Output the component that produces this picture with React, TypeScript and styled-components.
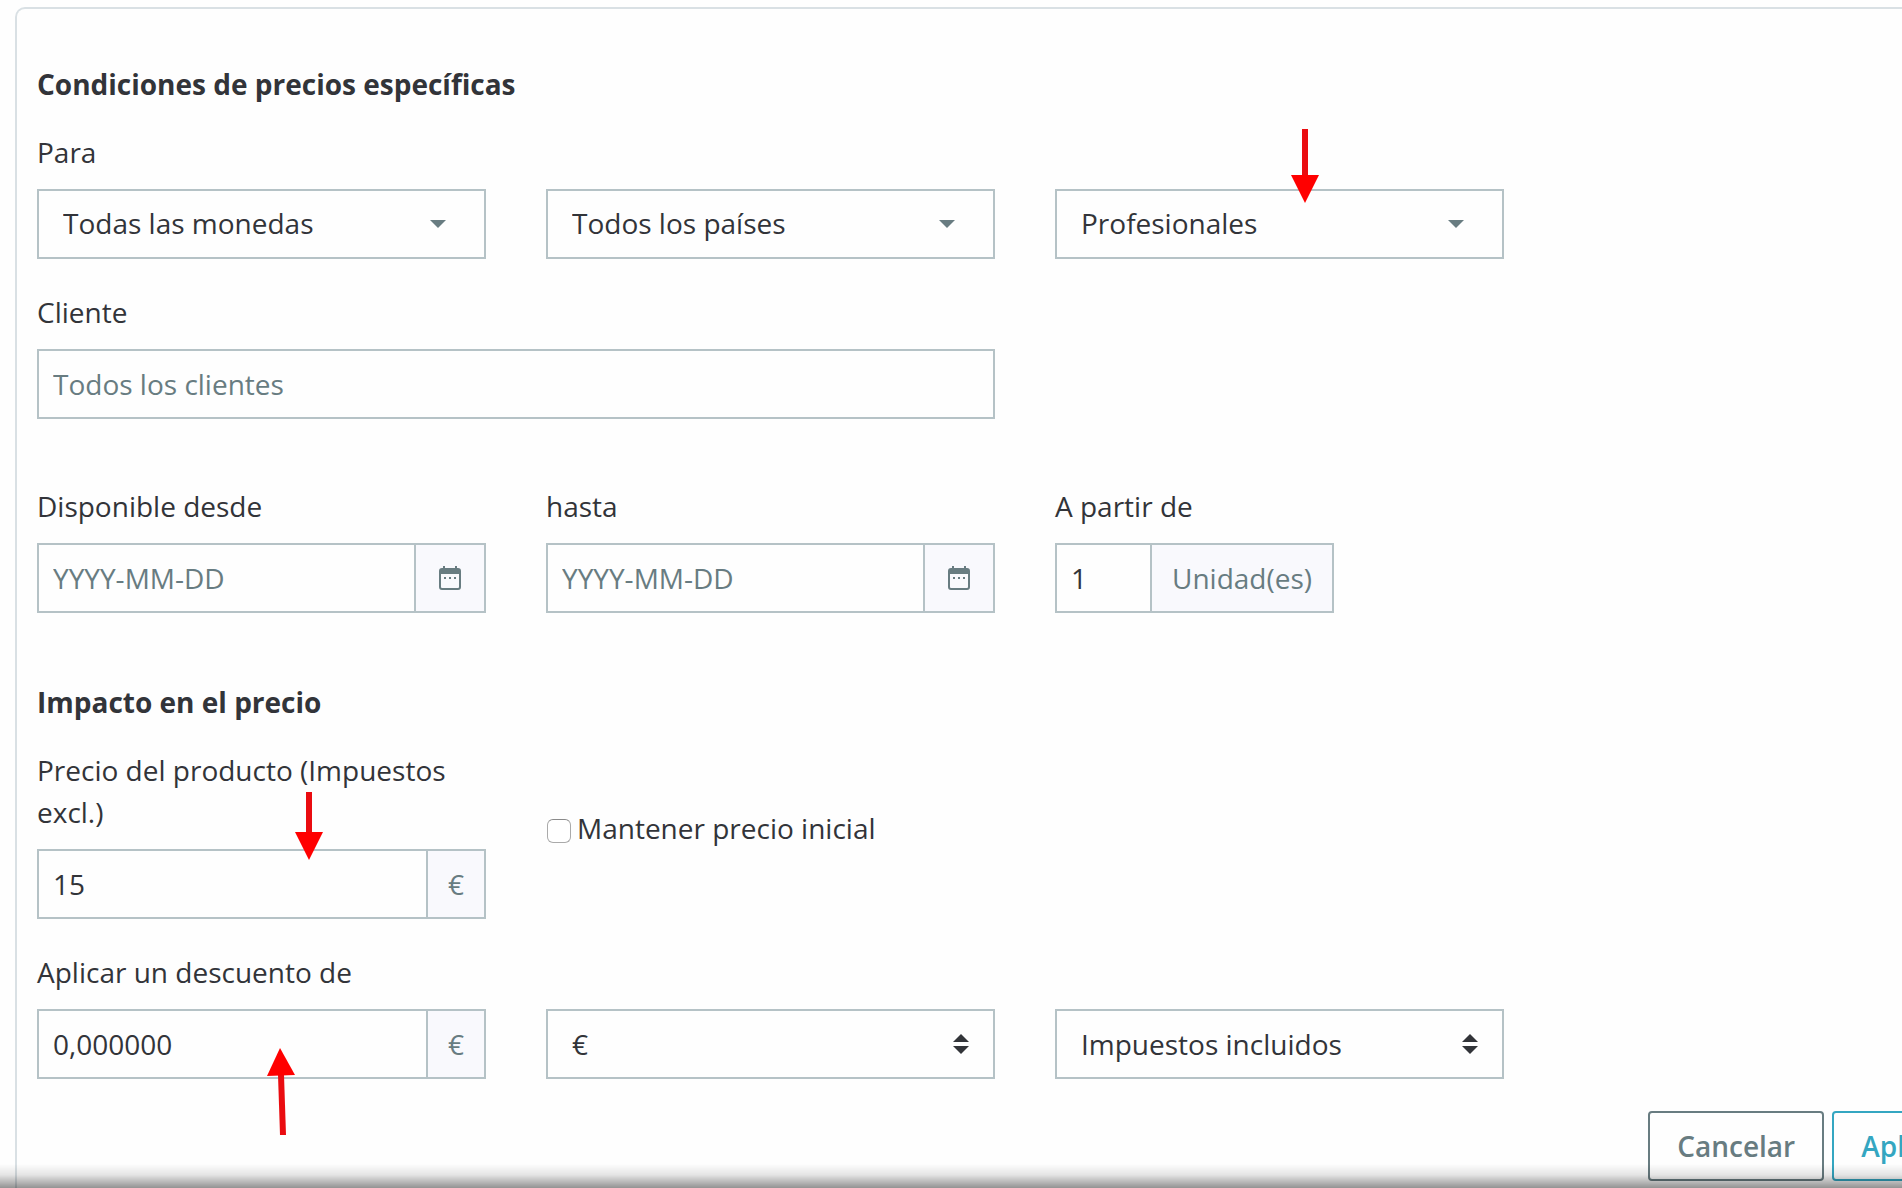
import React from "react";
import styled, { createGlobalStyle } from "styled-components";

const color = {
  text: "#323439",
  muted: "#687c81",
  border: "#b5c2c6",
  panelBorder: "#d9e0e4",
  addon: "#f9f9fd",
  surface: "#fefefe",
  primary: "#34a6c1",
  mark: "#ff0000",
  markShaft: "#ea0c10",
};

const GlobalStyle = createGlobalStyle`
  *, *::before, *::after { box-sizing: border-box; }
  body {
    margin: 0;
    background: ${color.surface};
    color: ${color.text};
    font-family: "Open Sans", "Noto Sans", sans-serif;
    font-size: 28px;
    line-height: 42px;
  }
  button, input, select { font: inherit; color: inherit; }
`;

const Page = styled.main`
  min-height: 100vh;
  padding: 7px 0 0 15px;
  overflow: hidden;
`;

/* The panel runs past the right edge of the window. */
const Panel = styled.form`
  width: calc(100% + 133px);
  padding: 54px 20px 7px;
  border: 2px solid ${color.panelBorder};
  border-bottom: 0;
  border-radius: 10px 10px 0 0;
`;

const Section = styled.section`
  & + & {
    margin-top: 68px;
  }
`;

const Title = styled.h2`
  margin: 0 0 26px;
  font-size: 28px;
  line-height: 42px;
  font-weight: 700;
`;

const Rows = styled.div`
  display: flex;
  flex-direction: column;
  gap: 32px;
`;

const Row = styled.div<{ $apart?: boolean }>`
  display: grid;
  grid-template-columns: repeat(4, minmax(0, 1fr));
  column-gap: 60px;
  padding-top: ${(p) => (p.$apart ? 34 : 0)}px;
`;

const Field = styled.div<{ $span?: number }>`
  grid-column: span ${(p) => p.$span ?? 1};
  display: flex;
  flex-direction: column;
  justify-content: flex-end;
`;

const Label = styled.label`
  margin-bottom: 16px;
`;

const Control = styled.div<{ $fit?: boolean }>`
  position: relative;
  display: flex;
  width: ${(p) => (p.$fit ? "fit-content" : "100%")};
  height: 70px;
  border: 2px solid ${color.border};
  background: ${color.surface};
`;

const Input = styled.input<{ $short?: boolean }>`
  flex: ${(p) => (p.$short ? "0 0 93px" : "1 1 0")};
  min-width: 0;
  padding: 0 14px;
  border: 0;
  background: transparent;

  &::placeholder {
    color: ${color.muted};
    opacity: 1;
  }
`;

const Addon = styled.span`
  display: flex;
  align-items: center;
  padding: 0 20px;
  border-left: 2px solid ${color.border};
  background: ${color.addon};
  color: ${color.muted};
`;

const CalendarButton = styled.button`
  display: flex;
  align-items: center;
  justify-content: center;
  width: 70px;
  padding: 0;
  border: 0;
  border-left: 2px solid ${color.border};
  background: ${color.addon};
  color: ${color.muted};
`;

const SelectBox = styled(Control)`
  display: grid;
  align-items: center;

  > select,
  > svg:last-of-type {
    grid-area: 1 / 1;
  }
`;

const NativeSelect = styled.select<{ $dropdown: boolean }>`
  width: 100%;
  height: 100%;
  padding: 0 64px ${(p) => (p.$dropdown ? 2 : 0)}px 24px;
  border: 0;
  appearance: none;
  background: transparent;
`;

const Caret = styled.svg`
  justify-self: end;
  width: 16px;
  height: 8px;
  margin-right: 38px;
  fill: ${color.muted};
  pointer-events: none;
`;

const Sorter = styled.svg`
  justify-self: end;
  width: 16px;
  height: 20px;
  margin-right: 24px;
  fill: ${color.text};
  pointer-events: none;
`;

const CheckField = styled.div`
  display: flex;
  align-items: center;
  align-self: start;
  gap: 6px;
  padding-top: 58px;
`;

const Checkbox = styled.input`
  appearance: none;
  width: 24px;
  height: 24px;
  margin: 6px 0 0 1px;
  border: 1px solid #aaaaaa;
  border-top-color: #8a8a8a;
  border-radius: 6px;
  background: #ffffff;

  &:checked {
    background: ${color.primary};
  }
`;

const Actions = styled.div`
  display: flex;
  justify-content: flex-end;
  gap: 8px;
  margin-top: 32px;
  padding-right: 29px;
`;

const Button = styled.button<{ $primary?: boolean }>`
  height: 70px;
  padding: 0 27px;
  border: 2px solid currentColor;
  border-radius: 4px;
  background: ${color.surface};
  color: ${(p) => (p.$primary ? color.primary : color.muted)};
  font-weight: 600;
`;

const MarkSvg = styled.svg<{ $left: number; $top: number }>`
  position: absolute;
  z-index: 1;
  left: ${(p) => p.$left}px;
  top: ${(p) => p.$top}px;
  pointer-events: none;
`;

const BottomShade = styled.div`
  position: fixed;
  inset: auto 0 0;
  height: 24px;
  background: linear-gradient(
    rgba(0, 0, 0, 0),
    rgba(0, 0, 0, 0.1) 45%,
    rgba(0, 0, 0, 0.42)
  );
  pointer-events: none;
`;

function DownMark({ left, top, length }: { left: number; top: number; length: number }) {
  const neck = length - 28;
  return (
    <MarkSvg $left={left} $top={top} width="28" height={length} aria-hidden="true">
      <rect x="11" y="0" width="6" height={neck + 1} fill={color.markShaft} />
      <path d={`M0 ${neck}H28L14 ${length}Z`} fill={color.mark} />
    </MarkSvg>
  );
}

function UpMark({ left, top }: { left: number; top: number }) {
  return (
    <MarkSvg $left={left} $top={top} width="28" height="88" aria-hidden="true">
      <path d="M11 27L17 27L19 87L13 87Z" fill={color.markShaft} />
      <path d="M13 0L28 27L0 28Z" fill={color.mark} />
    </MarkSvg>
  );
}

function CalendarIcon() {
  return (
    <svg width="22" height="24" viewBox="0 0 22 24" fill="currentColor" aria-hidden="true">
      <path
        fillRule="evenodd"
        d="M4 0H6V2H16V0H18V2H19Q22 2 22 5V21Q22 24 19 24H3Q0 24 0 21V5Q0 2 3 2H4ZM2 8V21Q2 22 3 22H19Q20 22 20 21V8Z"
      />
      <path d="M5 11H7V13H5ZM10 11H12V13H10ZM15 11H17V13H15Z" />
    </svg>
  );
}

type SelectProps = {
  id: string;
  options: string[];
  name?: string;
  sorter?: boolean;
  children?: React.ReactNode;
};

function Select({ id, options, name, sorter, children }: SelectProps) {
  return (
    <SelectBox>
      {children}
      <NativeSelect id={id} aria-label={name} $dropdown={!sorter}>
        {options.map((o) => (
          <option key={o}>{o}</option>
        ))}
      </NativeSelect>
      {sorter ? (
        <Sorter viewBox="0 0 16 20" aria-hidden="true">
          <path d="M8 0L16 8H0ZM0 12H16L8 20Z" />
        </Sorter>
      ) : (
        <Caret viewBox="0 0 16 8" aria-hidden="true">
          <path d="M0 0H16L8 8Z" />
        </Caret>
      )}
    </SelectBox>
  );
}

function DateField({ id, label }: { id: string; label: string }) {
  return (
    <Field>
      <Label htmlFor={id}>{label}</Label>
      <Control>
        <Input id={id} type="text" placeholder="YYYY-MM-DD" />
        <CalendarButton type="button" aria-label={label}>
          <CalendarIcon />
        </CalendarButton>
      </Control>
    </Field>
  );
}

export default function App() {
  return (
    <>
      <GlobalStyle />
      <Page>
        <Panel onSubmit={(e) => e.preventDefault()}>
          <Section>
            <Title>Condiciones de precios específicas</Title>
            <Rows>
              <Row>
                <Field>
                  <Label htmlFor="moneda">Para</Label>
                  <Select id="moneda" options={["Todas las monedas"]} />
                </Field>
                <Field>
                  <Select id="pais" name="País" options={["Todos los países"]} />
                </Field>
                <Field>
                  <Select id="grupo" name="Grupo" options={["Profesionales"]}>
                    <DownMark left={234} top={-62} length={74} />
                  </Select>
                </Field>
              </Row>
              <Row>
                <Field $span={2}>
                  <Label htmlFor="cliente">Cliente</Label>
                  <Control>
                    <Input id="cliente" type="text" placeholder="Todos los clientes" />
                  </Control>
                </Field>
              </Row>
              <Row $apart>
                <DateField id="desde" label="Disponible desde" />
                <DateField id="hasta" label="hasta" />
                <Field>
                  <Label htmlFor="cantidad">A partir de</Label>
                  <Control $fit>
                    <Input id="cantidad" type="text" defaultValue="1" $short />
                    <Addon>Unidad(es)</Addon>
                  </Control>
                </Field>
              </Row>
            </Rows>
          </Section>

          <Section>
            <Title>Impacto en el precio</Title>
            <Rows>
              <Row>
                <Field>
                  <Label htmlFor="precio">Precio del producto (Impuestos excl.)</Label>
                  <Control>
                    <Input id="precio" type="text" defaultValue="15" />
                    <Addon>€</Addon>
                    <DownMark left={256} top={-59} length={68} />
                  </Control>
                </Field>
                <CheckField>
                  <Checkbox id="mantener" type="checkbox" />
                  <label htmlFor="mantener">Mantener precio inicial</label>
                </CheckField>
              </Row>
              <Row>
                <Field>
                  <Label htmlFor="descuento">Aplicar un descuento de</Label>
                  <Control>
                    <Input id="descuento" type="text" defaultValue="0,000000" />
                    <Addon>€</Addon>
                    <UpMark left={228} top={37} />
                  </Control>
                </Field>
                <Field>
                  <Select id="tipo" name="Tipo de descuento" options={["€"]} sorter />
                </Field>
                <Field>
                  <Select id="impuestos" name="Impuestos" options={["Impuestos incluidos"]} sorter />
                </Field>
              </Row>
            </Rows>
          </Section>

          <Actions>
            <Button type="button">Cancelar</Button>
            <Button type="submit" $primary>
              Aplicar
            </Button>
          </Actions>
        </Panel>
      </Page>
      <BottomShade />
    </>
  );
}
